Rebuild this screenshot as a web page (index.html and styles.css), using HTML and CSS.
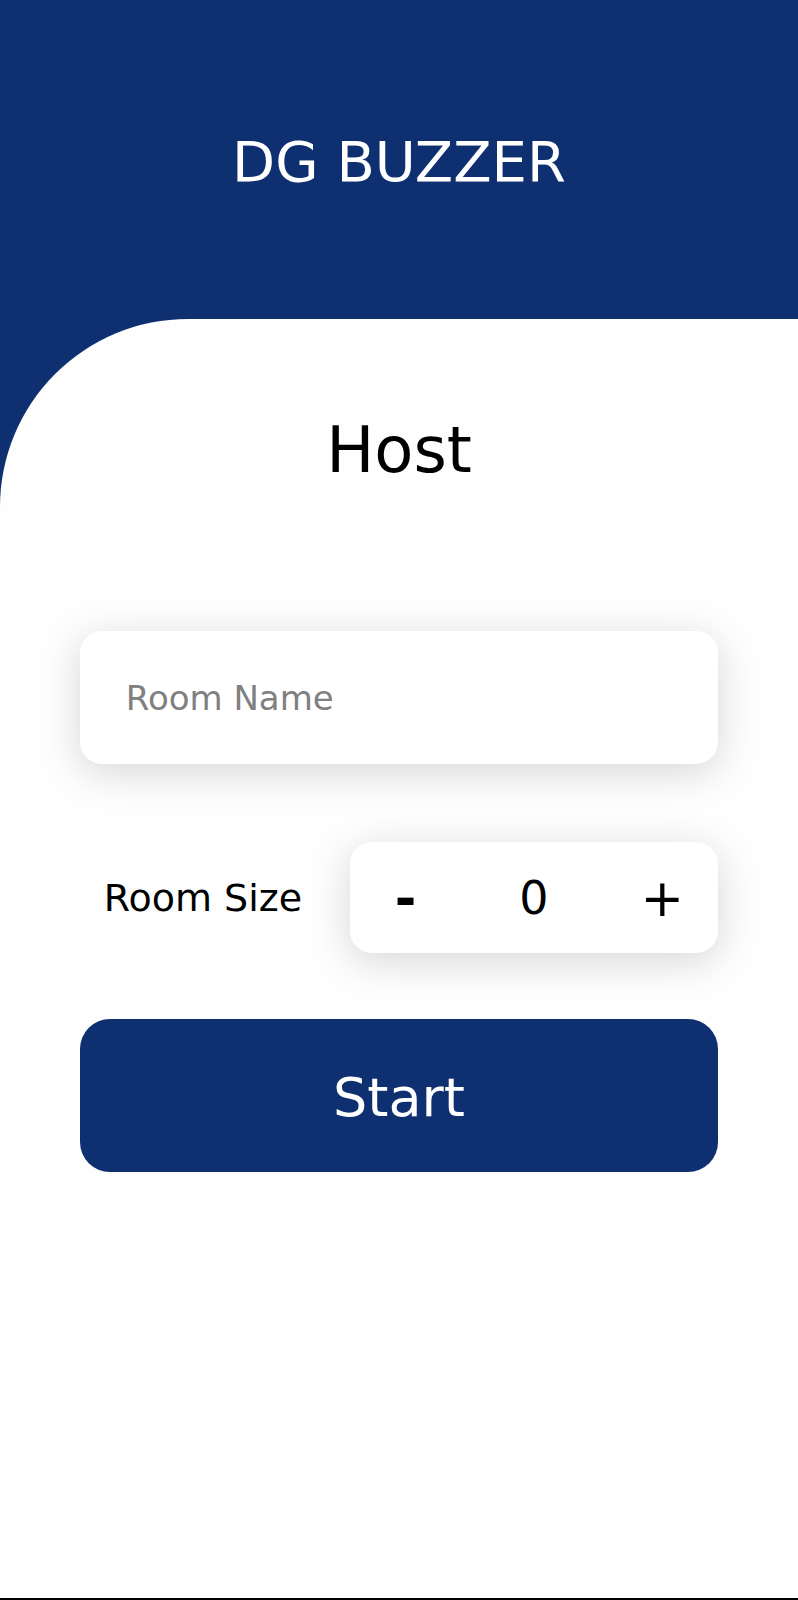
FILE: index.html
```html
<!DOCTYPE html>
<html lang="en">
<head>
<meta charset="utf-8">
<meta name="viewport" content="width=device-width, initial-scale=1">
<title>DG Buzzer</title>
<link rel="stylesheet" href="styles.css">
</head>
<body class="page">
<header class="banner">
  <h1 class="banner-title">DG BUZZER</h1>
</header>
<main class="panel">
  <h2 class="panel-title">Host</h2>
  <form class="room-form">
    <input class="room-name" type="text" placeholder="Room Name" aria-label="Room Name">
    <div class="size-row">
      <label class="size-label" for="room-size">Room Size</label>
      <div class="stepper">
        <button class="step step-minus" type="button" aria-label="Decrease room size">-</button>
        <input class="step-value" id="room-size" type="text" inputmode="numeric" value="0">
        <button class="step" type="button" aria-label="Increase room size">+</button>
      </div>
    </div>
    <button class="start" type="button">Start</button>
  </form>
</main>
</body>
</html>
```
FILE: styles.css
```css
* {
  box-sizing: border-box;
}

.page {
  margin: 0;
  min-height: 100vh;
  display: flex;
  flex-direction: column;
  background: #0e2f70;
  color: #000;
  font-family: "DejaVu Sans", sans-serif;
  border-bottom: 2px solid #000;
}

.banner {
  padding: 130px 24px 125px;
  text-align: center;
}

.banner-title {
  margin: 0;
  color: #fff;
  font-size: 56px;
  line-height: 64px;
  font-weight: 400;
}

.panel {
  flex: 1;
  padding: 95px 10% 48px;
  background: #fefefe;
  border-top-left-radius: 188px;
}

.panel-title {
  margin: 0 0 145px;
  font-size: 64px;
  line-height: 72px;
  font-weight: 400;
  text-align: center;
}

.room-form {
  display: flex;
  flex-direction: column;
}

.room-name,
.stepper {
  background: #fff;
  border: 0;
  border-radius: 22px;
  box-shadow: 0 8px 40px rgba(0, 0, 0, 0.16);
}

.room-name {
  width: 100%;
  height: 133px;
  padding: 0 46px;
  font-family: inherit;
  font-size: 34px;
}

.room-name::placeholder {
  color: #808080;
  opacity: 1;
}

.size-row {
  display: flex;
  align-items: center;
  justify-content: space-between;
  margin: 78px 0 66px;
  padding-left: 24px;
}

.size-label {
  font-size: 38px;
  line-height: 44px;
  white-space: nowrap;
}

.stepper {
  display: flex;
  align-items: center;
  flex: 0 0 60%;
  min-width: 0;
  height: 111px;
  padding: 0 24px;
}

.step,
.step-value {
  min-width: 0;
  padding: 0;
  border: 0;
  background: transparent;
  color: #000;
  font-family: inherit;
  text-align: center;
}

.step {
  flex: 0 0 64px;
  font-size: 52px;
  line-height: 64px;
}

.step-minus {
  font-weight: 700;
}

.step-value {
  flex: 1;
  width: 100%;
  font-size: 46px;
  line-height: 64px;
}

.start {
  padding: 46px 24px 42px;
  border: 0;
  border-radius: 30px;
  background: #0e2f70;
  color: #fff;
  font-family: inherit;
  font-size: 54px;
  line-height: 65px;
}
```
